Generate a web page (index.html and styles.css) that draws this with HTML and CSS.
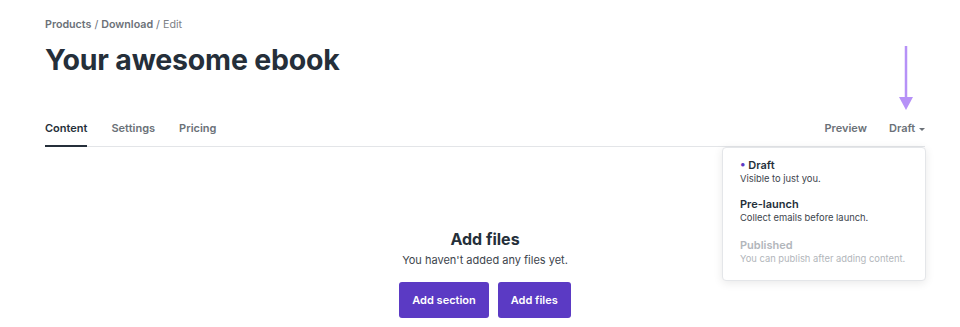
FILE: index.html
```html
<!DOCTYPE html>
<html lang="en">
  <head>
    <meta charset="UTF-8" />
    <title>Edit product</title>
    <link rel="stylesheet" href="styles.css">
  </head>
  <body>
    <div class="page">
      <div class="breadcrumb">
        <a href="#">Products</a> / <a href="#">Download</a> / <span>Edit</span>
      </div>
      <h1>Your awesome ebook</h1>

      <div class="tabbar">
        <nav class="tabs">
          <a href="#" class="tab active">Content</a>
          <a href="#" class="tab">Settings</a>
          <a href="#" class="tab">Pricing</a>
        </nav>
        <div class="actions">
          <a href="#" class="tab">Preview</a>
          <div class="status">
            <a href="#" class="tab">Draft <span class="caret"></span></a>
            <svg class="pointer" width="20" height="66" viewBox="0 0 20 66">
              <line x1="10" y1="0" x2="10" y2="52" stroke="#b691f7" stroke-width="2.5" />
              <polygon points="3,51 17,51 10,64" fill="#b691f7" />
            </svg>
            <div class="menu">
              <div class="option">
                <div class="option-title"><span class="dot">&bull;</span> Draft</div>
                <div class="option-desc">Visible to just you.</div>
              </div>
              <div class="option">
                <div class="option-title">Pre-launch</div>
                <div class="option-desc">Collect emails before launch.</div>
              </div>
              <div class="option disabled">
                <div class="option-title">Published</div>
                <div class="option-desc">You can publish after adding content.</div>
              </div>
            </div>
          </div>
        </div>
      </div>

      <div class="empty">
        <h2>Add files</h2>
        <p>You haven't added any files yet.</p>
        <div class="buttons">
          <button class="btn">Add section</button>
          <button class="btn">Add files</button>
        </div>
      </div>
    </div>
  </body>
</html>
```

FILE: styles.css
```css
:root {
  --text: #252f3a;
  --muted: #6b7178;
  --primary: #5b3ac4;
  --line: #e3e5e8;
}

* {
  margin: 0;
  padding: 0;
  box-sizing: border-box;
  font-family: "Inter", sans-serif;
}

body {
  background: #ffffff;
  color: var(--text);
}

.page {
  padding: 18px 35px 0 45px;
}

.breadcrumb {
  font-size: 10.7px;
  line-height: 14px;
  color: var(--muted);
}

.breadcrumb a {
  color: var(--muted);
  text-decoration: none;
  font-weight: 600;
}

.breadcrumb span {
  color: #7d8186;
}

h1 {
  font-size: 28.5px;
  font-weight: 700;
  line-height: 36px;
  margin-top: 10px;
  letter-spacing: -0.2px;
}

.tabbar {
  display: flex;
  justify-content: space-between;
  align-items: flex-end;
  margin-top: 43px;
  border-bottom: 1px solid var(--line);
}

.tabs,
.actions {
  display: flex;
  gap: 24px;
}

.actions {
  gap: 22px;
}

.tab {
  display: block;
  font-size: 11px;
  line-height: 14px;
  font-weight: 600;
  color: var(--muted);
  text-decoration: none;
  padding-bottom: 10px;
  border-bottom: 2px solid transparent;
  margin-bottom: -1px;
}

.tab.active {
  color: var(--text);
  border-bottom-color: var(--text);
}

.caret {
  display: inline-block;
  vertical-align: middle;
  margin-left: 1px;
  border-left: 3px solid transparent;
  border-right: 3px solid transparent;
  border-top: 3px solid var(--muted);
}

.status {
  position: relative;
}

.pointer {
  position: absolute;
  left: 7px;
  top: -75px;
}

.menu {
  position: absolute;
  top: 26px;
  right: -1px;
  width: 204px;
  background: #ffffff;
  border: 1px solid #e4e6e9;
  border-radius: 4px;
  box-shadow: 0 2px 10px rgba(0, 0, 0, 0.09);
  padding: 10px 10px 14px 17px;
  z-index: 10;
}

.option {
  margin-bottom: 11px;
}

.option:last-child {
  margin-bottom: 0;
}

.option.disabled {
  margin-top: 13px;
}

.option-title {
  font-size: 11px;
  line-height: 14px;
  font-weight: 600;
  color: var(--text);
}

.dot {
  color: var(--primary);
}

.option-desc {
  font-size: 9.4px;
  line-height: 14px;
  color: #3d454d;
  white-space: nowrap;
}

.option.disabled .option-title,
.option.disabled .option-desc {
  color: #b2b6bb;
}

.empty {
  text-align: center;
  padding-top: 82px;
}

.empty h2 {
  font-size: 16px;
  line-height: 20px;
  font-weight: 700;
}

.empty p {
  font-size: 11px;
  line-height: 14px;
  color: #3d454d;
  margin-top: 4px;
}

.buttons {
  display: flex;
  justify-content: center;
  gap: 9px;
  margin-top: 15px;
}

.btn {
  background: var(--primary);
  color: #ffffff;
  border: none;
  border-radius: 3px;
  height: 36px;
  padding: 0 13px;
  font-size: 11px;
  font-weight: 600;
  cursor: pointer;
}
```
